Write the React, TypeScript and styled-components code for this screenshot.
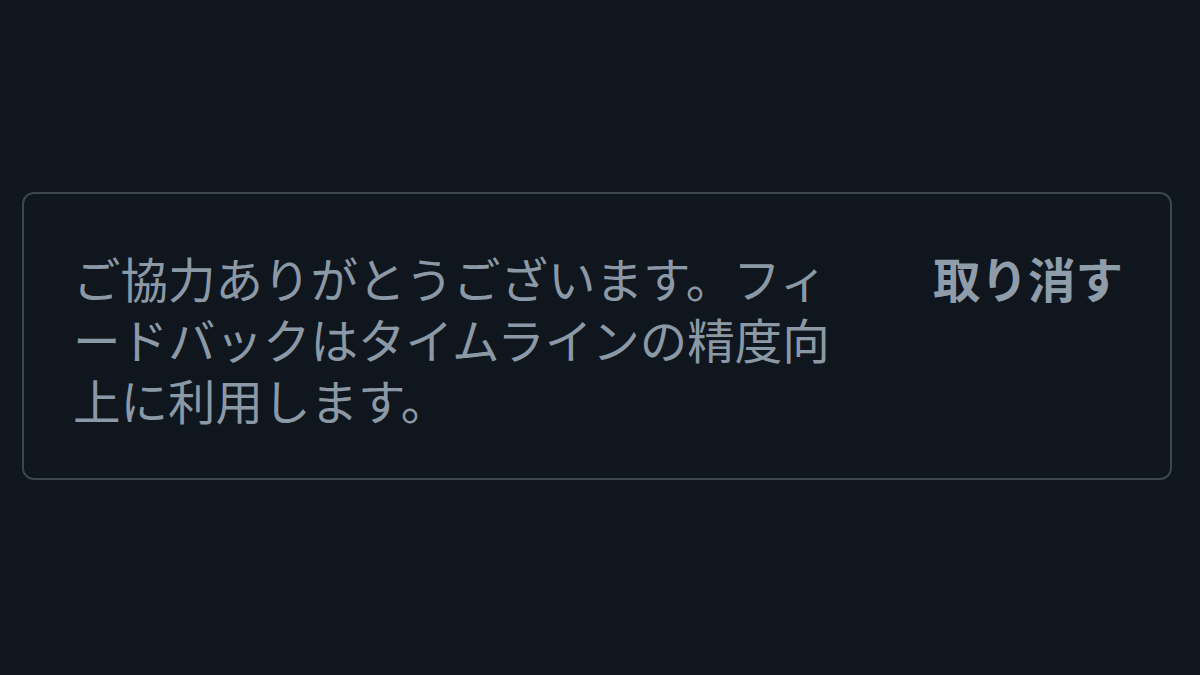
import React from "react";
import styled, { createGlobalStyle } from "styled-components";

const GlobalStyle = createGlobalStyle`
  html, body {
    margin: 0;
    padding: 0;
    background-color: #10161e;
  }
  #root {
    height: 100vh;
  }
`;

const Page = styled.div`
  height: 100%;
  display: flex;
  align-items: center;
  padding: 0 28px 3px 22px;
  box-sizing: border-box;
  font-family: "Noto Sans CJK JP", "Noto Sans", sans-serif;
`;

const Notice = styled.div`
  flex: 1;
  display: flex;
  justify-content: space-between;
  align-items: flex-start;
  border: 2px solid #3b4651;
  border-radius: 12px;
  padding: 53px 47px 48px 49px;
`;

const Message = styled.p`
  margin: 0;
  width: 780px;
  font-size: 47.5px;
  line-height: 61px;
  color: #8b99a6;
  line-break: loose;
`;

const UndoButton = styled.button`
  background: none;
  border: none;
  padding: 0;
  font-family: inherit;
  font-size: 47.5px;
  line-height: 61px;
  font-weight: 700;
  color: #8f9ca9;
  cursor: pointer;
`;

const App: React.FC = () => {
  return (
    <>
      <GlobalStyle />
      <Page>
        <Notice>
          <Message>
            ご協力ありがとうございます。フィードバックはタイムラインの精度向上に利用します。
          </Message>
          <UndoButton>取り消す</UndoButton>
        </Notice>
      </Page>
    </>
  );
};

export default App;
